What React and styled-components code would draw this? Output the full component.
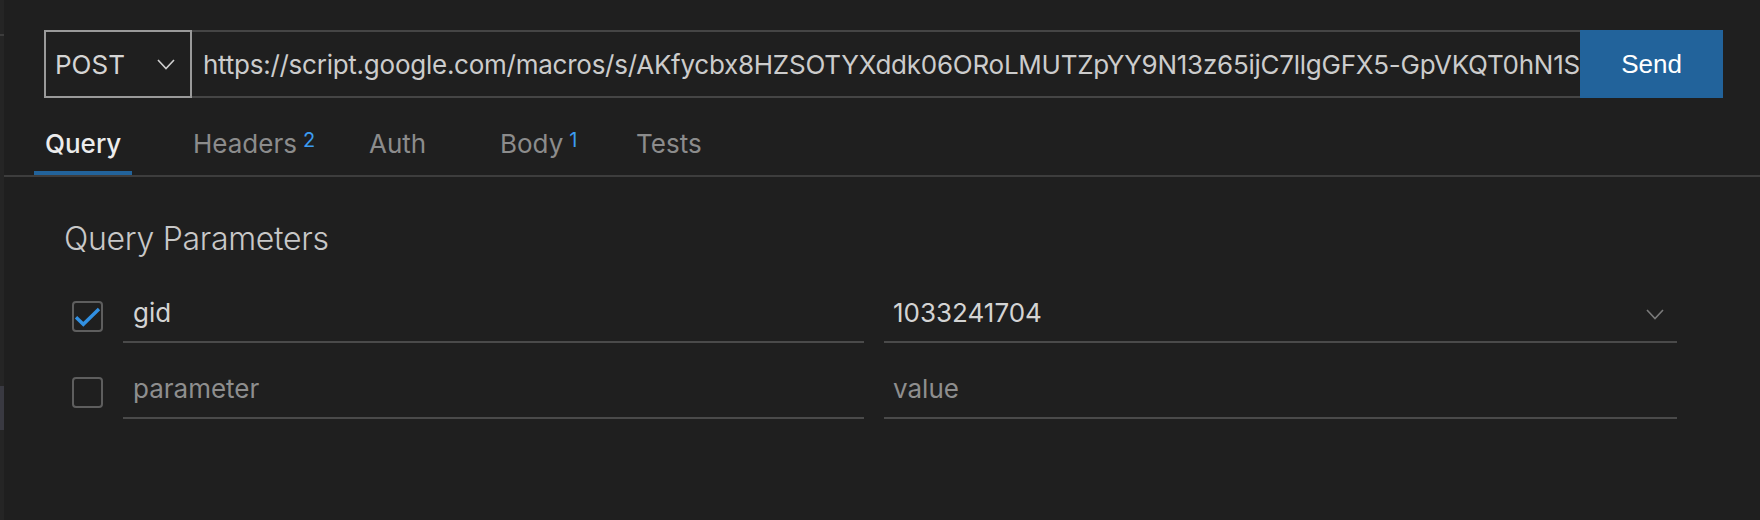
import React from 'react';
import styled, { createGlobalStyle } from 'styled-components';

const GlobalStyle = createGlobalStyle`
  html, body { margin: 0; padding: 0; background: #1f1f1f; }
  body { font-family: Inter, "Noto Sans", sans-serif; -webkit-font-smoothing: antialiased; }
  * { box-sizing: border-box; }
`;

const Shell = styled.div`
  display: flex;
  width: 1760px;
  height: 520px;
  background: #1f1f1f;
  overflow: hidden;
`;

const Sash = styled.div`
  width: 4px;
  flex: none;
  background: #252525;
  display: flex;
  flex-direction: column;
`;

const SashTick = styled.div`
  margin-top: 34px;
  height: 2px;
  background: #3c3c3c;
`;

const SashThumb = styled.div`
  margin-top: 350px;
  height: 44px;
  background: #393941;
`;

const Main = styled.main`
  flex: 1;
  display: flex;
  flex-direction: column;
  min-width: 0;
`;

const Toolbar = styled.div`
  display: flex;
  height: 68px;
  margin: 30px 37px 0 40px;
`;

const MethodSelect = styled.div`
  width: 148px;
  flex: none;
  display: flex;
  align-items: center;
  justify-content: space-between;
  padding: 0 15px 0 9px;
  border: 2px solid #9a9a9a;
  color: #d4d4d4;
  font-size: 26px;
`;

const UrlField = styled.div`
  flex: 1;
  min-width: 0;
  display: flex;
  align-items: center;
  padding-left: 11px;
  border-top: 2px solid #454545;
  border-bottom: 2px solid #454545;
  color: #cccccc;
  font-size: 26px;
  letter-spacing: -0.25px;
  white-space: nowrap;
  overflow: hidden;
`;

const SendButton = styled.button`
  width: 143px;
  flex: none;
  border: none;
  background: #22639b;
  color: #ffffff;
  font-family: "Liberation Sans", Arial, sans-serif;
  font-size: 26px;
  padding: 0;
`;

const TabBar = styled.div`
  display: flex;
  align-items: flex-end;
  height: 79px;
  padding-left: 30px;
  border-bottom: 2px solid #3d3d3d;
`;

const Tab = styled.div`
  flex: none;
  width: ${(p) => (p.$width ? `${p.$width}px` : 'auto')};
  display: flex;
`;

const TabLabel = styled.div`
  padding: 0 11px 11px;
  border-bottom: 4px solid ${(p) => (p.$active ? '#22639b' : 'transparent')};
  font-size: 26px;
  line-height: 32px;
  font-weight: ${(p) => (p.$active ? 500 : 400)};
  color: ${(p) => (p.$active ? '#ececec' : '#8c8c8c')};
  white-space: nowrap;
`;

const Badge = styled.sup`
  font-size: 20px;
  line-height: 0;
  color: #3c9cf0;
  vertical-align: 6px;
  margin-left: 6px;
`;

const Section = styled.section`
  padding-left: 60px;
`;

const Heading = styled.h2`
  margin: 42px 0 0;
  font-size: 32px;
  line-height: 40px;
  font-weight: 300;
  letter-spacing: -0.3px;
  color: #c8c8c8;
`;

const ParamList = styled.div`
  margin-top: 38px;
  padding-left: 8px;
  display: flex;
  flex-direction: column;
  gap: 30px;
`;

const ParamRow = styled.div`
  display: grid;
  grid-template-columns: 31px 741px 793px;
  column-gap: 20px;
  align-items: start;
`;

const CheckBox = styled.div`
  width: 31px;
  height: 31px;
  margin-top: 4px;
  border: 2px solid #5e5e5e;
  border-radius: 4px;
  display: flex;
`;

const Cell = styled.div`
  height: 46px;
  display: flex;
  align-items: flex-start;
  justify-content: space-between;
  padding: 0 13px 0 ${(p) => p.$pad || 10}px;
  border-bottom: 2px solid #4a4a4a;
  font-size: 26px;
  line-height: 32px;
  color: ${(p) => (p.$placeholder ? '#8e8e8e' : '#d4d4d4')};
`;

const CellChevron = styled.svg`
  margin-top: 12px;
  flex: none;
`;

const Chevron = ({ color = '#cfcfcf', as: Comp = 'svg', ...rest }) => (
  <Comp width="18" height="11" viewBox="0 0 18 11" fill="none" {...rest}>
    <polyline points="1,1 9,9.5 17,1" stroke={color} strokeWidth="1.6" />
  </Comp>
);

const Check = () => (
  <svg width="27" height="27" viewBox="0 0 27 27" fill="none">
    <polyline
      points="2,14.3 9.3,21.3 25,6"
      stroke="#3190e2"
      strokeWidth="3.4"
      strokeLinecap="butt"
      strokeLinejoin="miter"
    />
  </svg>
);

const tabs = [
  { label: 'Query', width: 148, active: true },
  { label: 'Headers', badge: '2', width: 176 },
  { label: 'Auth', width: 131 },
  { label: 'Body', badge: '1', width: 136 },
  { label: 'Tests' },
];

const params = [
  { checked: true, key: 'gid', value: '1033241704', dropdown: true },
  { checked: false, key: 'parameter', value: 'value', placeholder: true },
];

const url =
  'https://script.google.com/macros/s/AKfycbx8HZSOTYXddk06ORoLMUTZpYY9N13z65ijC7llgGFX5-GpVKQT0hN1S';

export default function App() {
  return (
    <>
      <GlobalStyle />
      <Shell>
        <Sash>
          <SashTick />
          <SashThumb />
        </Sash>
        <Main>
          <Toolbar>
            <MethodSelect>
              <span>POST</span>
              <Chevron color="#cfcfcf" />
            </MethodSelect>
            <UrlField>{url}</UrlField>
            <SendButton>Send</SendButton>
          </Toolbar>
          <TabBar>
            {tabs.map((t) => (
              <Tab key={t.label} $width={t.width}>
                <TabLabel $active={t.active}>
                  {t.label}
                  {t.badge && <Badge>{t.badge}</Badge>}
                </TabLabel>
              </Tab>
            ))}
          </TabBar>
          <Section>
            <Heading>Query Parameters</Heading>
            <ParamList>
              {params.map((p) => (
                <ParamRow key={p.key}>
                  <CheckBox>{p.checked && <Check />}</CheckBox>
                  <Cell $placeholder={p.placeholder}>
                    <span>{p.key}</span>
                  </Cell>
                  <Cell $placeholder={p.placeholder} $pad={9}>
                    <span>{p.value}</span>
                    {p.dropdown && <Chevron as={CellChevron} color="#7a7a7a" />}
                  </Cell>
                </ParamRow>
              ))}
            </ParamList>
          </Section>
        </Main>
      </Shell>
    </>
  );
}
